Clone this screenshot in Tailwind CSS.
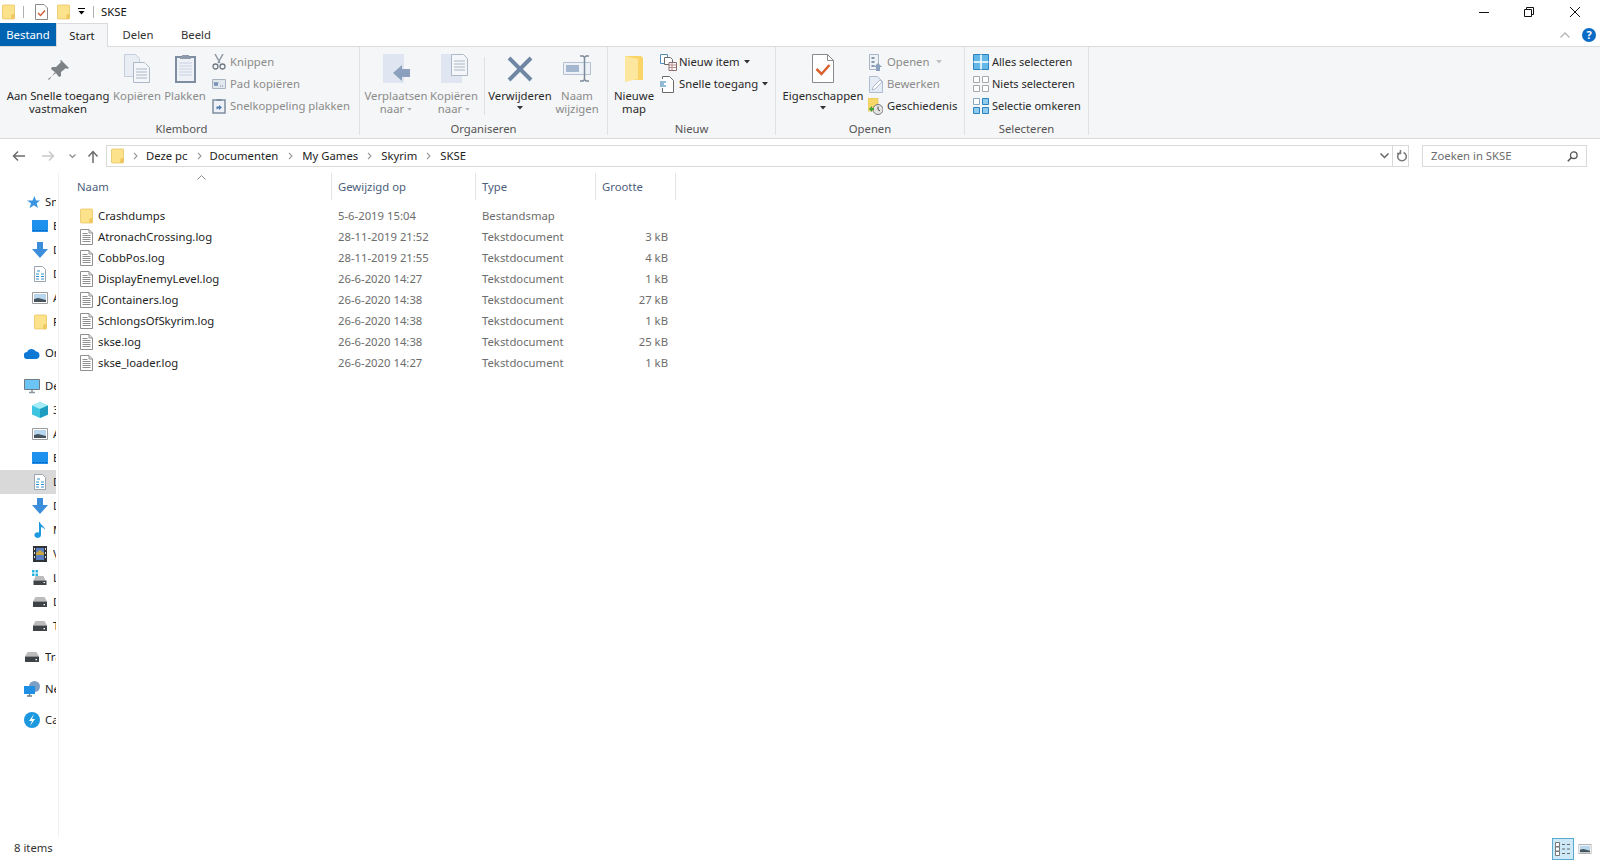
<!DOCTYPE html>
<html lang="nl">
<head>
<meta charset="UTF-8">
<title>SKSE</title>
<script src="https://cdn.jsdelivr.net/npm/@tailwindcss/browser@4"></script>
</head>
<body class="bg-white">

<!-- shared icons -->
<svg class="hidden">
  <symbol id="folder" viewBox="0 0 14 16">
    <path d="M.5 1.500a1 1 0 0 1 1-1h11a1 1 0 0 1 1 1v13a1 1 0 0 1-1 1h-11a1 1 0 0 1-1-1z" fill="#fde28c" stroke="#ecca6c"/>
    <path d="M10 15.500v-4.500l3.500-1v4.500a1 1 0 0 1-1 1z" fill="#eec65f"/>
  </symbol>
  <symbol id="doc" viewBox="0 0 13 16">
    <path d="M.5.5h8.500l3.500 3.500v11.500h-12z" fill="#fff" stroke="#8f8f8f"/>
    <path d="M9 .5v3.500h3.500" fill="none" stroke="#8f8f8f"/>
    <path d="M2.500 4.500h5M2.500 6.500h8M2.500 8.500h8M2.500 10.500h8M2.500 12.500h8" stroke="#8f8f8f"/>
  </symbol>
  <symbol id="screen" viewBox="0 0 16 14">
    <path d="M0 1h16v12H0z" fill="#1e90ee"/><path d="M1 11.500h14" stroke="#0c5fae" stroke-dasharray="2 1"/>
  </symbol>
  <symbol id="down" viewBox="0 0 16 16">
    <path d="M5 0h6v7h5l-8 9-8-9h5z" fill="#3a8edc"/>
  </symbol>
  <symbol id="textdoc" viewBox="0 0 12 16">
    <path d="M.5.5h8l3 3v12H.5z" fill="#fff" stroke="#9aa5ad"/>
    <path d="M3 5h3M2 8h3M7 8h3M2 10.500h3M7 10.500h3M2 13h3M7 13h3" stroke="#2f8fc8"/>
  </symbol>
  <symbol id="pics" viewBox="0 0 16 12">
    <path d="M.5.5h15v11H.5z" fill="#fff" stroke="#9c9c9c"/>
    <path d="M2 2h12v8H2z" fill="#b8d6ee"/><path d="M2 10V7l4-1 8 2v2z" fill="#46545c"/>
  </symbol>
  <symbol id="drive" viewBox="0 0 14 10">
    <path d="M2.500 0h9L14 4.500H0z" fill="#bcbcbc"/><path d="M0 4.500h14V10H0z" fill="#3d4346"/><path d="M10.500 7h1.500v1.200h-1.500z" fill="#fff"/>
  </symbol>
  <symbol id="caret" viewBox="0 0 6 4">
    <path d="M0 0h6L3 3.500z" fill="currentColor"/>
  </symbol>
  <symbol id="crumb" viewBox="0 0 5 8">
    <path d="M1 1l3 3-3 3" fill="none" stroke="#9a9a9a" stroke-width="1.100"/>
  </symbol>
</svg>

<div class="w-[1600px] h-[860px] overflow-hidden flex flex-col bg-white text-[11.3px] whitespace-nowrap text-[#1e1e1e] font-['Noto_Sans',sans-serif]">

  <!-- title bar -->
  <div class="h-[23px] flex items-center relative">
    <svg class="w-[13px] h-[16px] ml-[2px]"><use href="#folder"/></svg>
    <div class="w-px h-[12px] bg-[#b0b0b0] ml-[8px]"></div>
    <svg class="w-[13px] h-[16px] ml-[11px]" viewBox="0 0 13 16">
      <path d="M.5.5h8.500l3.500 3.500v11.500H.5z" fill="#fff" stroke="#8a8a8a"/>
      <path d="M3 9l2.500 2.500L10 6.500" fill="none" stroke="#d4603a" stroke-width="1.500"/>
    </svg>
    <svg class="w-[13px] h-[16px] ml-[9px]"><use href="#folder"/></svg>
    <div class="ml-[8px] flex flex-col items-center gap-[2px]">
      <div class="w-[7px] h-px bg-black"></div>
      <svg class="w-[7px] h-[4px] text-black"><use href="#caret"/></svg>
    </div>
    <div class="w-px h-[12px] bg-[#b0b0b0] ml-[8px]"></div>
    <span class="ml-[7px] pt-px text-[#111]">SKSE</span>
    <div class="ml-auto flex items-center">
      <svg class="w-[10px] h-[10px]" viewBox="0 0 10 10"><path d="M0 5.500h10" stroke="#111"/></svg>
      <svg class="w-[10px] h-[10px] ml-[35px]" viewBox="0 0 10 10"><path d="M.5 2.500h7v7h-7zM2.500 2.500v-2h7v7h-2" fill="none" stroke="#111"/></svg>
      <svg class="w-[10px] h-[10px] ml-[36px] mr-[20px]" viewBox="0 0 10 10"><path d="M0 0l10 10M10 0L0 10" stroke="#111"/></svg>
    </div>
  </div>

  <!-- tabs -->
  <div class="h-[23px] flex items-stretch relative">
    <div class="w-[56px] pt-px bg-[#0063b1] text-white flex items-center justify-center">Bestand</div>
    <div class="w-[52px] pt-px bg-[#f5f6f7] border-x border-t border-[#dadbdc] -mb-px z-10 flex items-center justify-center">Start</div>
    <div class="w-[60px] pt-px flex items-center justify-center text-[#333]">Delen</div>
    <div class="w-[56px] pt-px flex items-center justify-center text-[#333]">Beeld</div>
    <div class="ml-auto flex items-center">
      <svg class="w-[10px] h-[6px]" viewBox="0 0 10 6"><path d="M.5 5.500L5 1l4.500 4.500" fill="none" stroke="#b5b5b5" stroke-width="1.300"/></svg>
      <div class="w-[14px] h-[14px] rounded-full bg-[#0a6cc4] text-white font-bold text-[11px] leading-[14px] text-center ml-[12px] mr-[4px]">?</div>
    </div>
  </div>

  <!-- ribbon -->
  <div class="h-[93px] flex bg-[#f5f6f7] border-y border-[#dadbdc] text-[#8b8b8b]">

    <!-- Klembord -->
    <div class="w-[360px] relative border-r border-[#e1e2e3] mb-[3px]">
      <div class="flex h-[75px] pl-[4px]">
        <div class="w-[108px] flex flex-col items-center text-[#2a2a2a]">
          <div class="h-[42px] flex items-center justify-center pt-[5px]">
            <svg class="w-[21px] h-[21px]" viewBox="0 0 21 21"><path d="M13 0l8 8-2 1-1-1-5 4 0 4-2 1-4-5-6 8-1-1 8-6-5-4 1-2 4 0 5-5-1-1z" fill="#7d8287"/></svg>
          </div>
          <div class="text-center leading-[13px]">Aan Snelle toegang<br>vastmaken</div>
        </div>
        <div class="w-[50px] flex flex-col items-center">
          <div class="h-[42px] flex items-center justify-center pt-[1px]">
            <svg class="w-[26px] h-[29px]" viewBox="0 0 26 29">
              <path d="M.5.500h11l4 4v18H.500z" fill="#e9eef5" stroke="#c4cedb"/>
              <path d="M9.500 8.500h11l5 5v15h-16z" fill="#f4f6f9" stroke="#aeb9c7"/>
              <path d="M12 15h11M12 18h11M12 21h11M12 24h11" stroke="#a9b6c6"/>
            </svg>
          </div>
          <div class="leading-[13px]">Kopiëren</div>
        </div>
        <div class="w-[46px] flex flex-col items-center">
          <div class="h-[42px] flex items-center justify-center pt-[1px]">
            <svg class="w-[21px] h-[29px]" viewBox="0 0 21 29">
              <path d="M1 3h19v25H1z" fill="#eef1f6" stroke="#7f8da0" stroke-width="2"/>
              <path d="M7 3V1h7v2h2v2H5V3z" fill="#8e9aab"/>
              <path d="M4 9h13M4 12h13M4 15h13M4 18h13M4 21h13" stroke="#c9d3e0"/>
            </svg>
          </div>
          <div class="leading-[13px]">Plakken</div>
        </div>
        <div class="flex flex-col pt-[4px] ml-[4px]">
          <div class="h-[22px] flex items-center gap-[4px]">
            <svg class="w-[14px] h-[16px]" viewBox="0 0 14 16"><path d="M3 0l5 9M11 0L6 9" stroke="#8d98a5" stroke-width="1.500"/><circle cx="3.500" cy="12.500" r="2.500" fill="none" stroke="#6f7a86" stroke-width="1.300"/><circle cx="10.500" cy="12.500" r="2.500" fill="none" stroke="#6f7a86" stroke-width="1.300"/></svg>
            <span>Knippen</span>
          </div>
          <div class="h-[22px] flex items-center gap-[4px]">
            <svg class="w-[14px] h-[10px]" viewBox="0 0 14 10"><path d="M.500.500h13v9H.500z" fill="#e3e8ef" stroke="#a8b3c1"/><path d="M2 3l1 4 1-4 1 4 1-4M8 7h1M10 7h1" fill="none" stroke="#6e8bb0"/></svg>
            <span>Pad kopiëren</span>
          </div>
          <div class="h-[22px] flex items-center gap-[4px]">
            <svg class="w-[14px] h-[16px]" viewBox="0 0 14 16"><path d="M1 2h12v13H1z" fill="#eef1f6" stroke="#7f8da0" stroke-width="1.500"/><path d="M4.500 1h5v2h-5z" fill="#7f8da0"/><path d="M4.500 11.500V8.500h2.500V7l3 2.500-3 2.500v-1.500H6z" fill="#4f7cae"/></svg>
            <span>Snelkoppeling plakken</span>
          </div>
        </div>
      </div>
      <div class="text-center text-[#555] leading-[14px] pl-[4px]">Klembord</div>
    </div>

    <!-- Organiseren -->
    <div class="w-[248px] border-r border-[#e1e2e3] mb-[3px]">
      <div class="flex h-[75px] pl-[4px]">
        <div class="w-[64px] flex flex-col items-center">
          <div class="h-[42px] flex items-center justify-center pt-[1px]">
            <svg class="w-[27px] h-[29px]" viewBox="0 0 27 29"><path d="M0 0h21v29H0z" fill="#dfe6f1"/><path d="M10 19l9-8v4h8v8h-8v4z" fill="#8aa0bc"/></svg>
          </div>
          <div class="text-center leading-[13px]">Verplaatsen<br>naar <svg class="inline w-[5px] h-[3px] align-middle text-[#b0b0b0]"><use href="#caret"/></svg></div>
        </div>
        <div class="w-[52px] flex flex-col items-center">
          <div class="h-[42px] flex items-center justify-center pt-[1px]">
            <svg class="w-[27px] h-[29px]" viewBox="0 0 27 29"><path d="M0 0h21v29H0z" fill="#dfe6f1"/><path d="M10.500 0.500h12l4 4v17h-16z" fill="#f4f6f9" stroke="#aeb9c7"/><path d="M13 7h11M13 10h11M13 13h11M13 16h11" stroke="#a9b6c6"/></svg>
          </div>
          <div class="text-center leading-[13px]">Kopiëren<br>naar <svg class="inline w-[5px] h-[3px] align-middle text-[#b0b0b0]"><use href="#caret"/></svg></div>
        </div>
        <div class="w-px h-[58px] bg-[#dfe0e1] mt-[10px] ml-[4px] mr-[3px]"></div>
        <div class="w-[64px] flex flex-col items-center text-[#2a2a2a]">
          <div class="h-[42px] flex items-center justify-center pt-[1px]">
            <svg class="w-[26px] h-[26px]" viewBox="0 0 26 26"><path d="M2 2l22 22M24 2L2 24" stroke="#6f86a5" stroke-width="4"/></svg>
          </div>
          <div class="text-center leading-[13px]">Verwijderen</div>
          <svg class="w-[6px] h-[4px] mt-[4px] text-[#333]"><use href="#caret"/></svg>
        </div>
        <div class="w-[50px] flex flex-col items-center">
          <div class="h-[42px] flex items-center justify-center pt-[1px]">
            <svg class="w-[28px] h-[27px]" viewBox="0 0 28 27"><path d="M.5 7.500h27v12H.500z" fill="#eef2f7" stroke="#b3c0d1"/><path d="M3 10h13v7H3z" fill="#a3b7d1"/><path d="M17 1h3l1.500 1.500L23 1h3M17 26h3l1.500-1.500L23 26h3M21.500 2v23" fill="none" stroke="#7d8a9a" stroke-width="1.500"/></svg>
          </div>
          <div class="text-center leading-[13px]">Naam<br>wijzigen</div>
        </div>
      </div>
      <div class="text-center text-[#555] leading-[14px]">Organiseren</div>
    </div>

    <!-- Nieuw -->
    <div class="w-[168px] border-r border-[#e1e2e3] mb-[3px]">
      <div class="flex h-[75px] pl-[3px] text-[#2a2a2a]">
        <div class="w-[46px] flex flex-col items-center">
          <div class="h-[42px] flex items-center justify-center pt-[1px]">
            <svg class="w-[18px] h-[26px]" viewBox="0 0 18 26"><path d="M0 0h16l2 2v22H3l-3 2z" fill="#fbd468"/><path d="M0 0l13 3v20l-13 3z" fill="#fde79e"/></svg>
          </div>
          <div class="text-center leading-[13px]">Nieuwe<br>map</div>
        </div>
        <div class="flex flex-col pt-[4px] ml-[3px]">
          <div class="h-[22px] flex items-center">
            <svg class="w-[17px] h-[17px]" viewBox="0 0 17 17"><path d="M.5.5h7v9h-7z" fill="#fff" stroke="#4f8fc0"/><path d="M4.500 3.500h6l2 2v5h-8z" fill="#fff" stroke="#6a6a6a"/><path d="M9 8.500h7.500v8H9z" fill="#fff" stroke="#8a6a6a"/><path d="M9 11h7M9 13.500h7M12 9v7" stroke="#b58a8a"/></svg>
            <span class="ml-[2px]">Nieuw item</span>
            <svg class="w-[6px] h-[4px] ml-[4px] text-[#333]"><use href="#caret"/></svg>
          </div>
          <div class="h-[22px] flex items-center">
            <svg class="w-[14px] h-[17px] mr-[3px]" viewBox="0 0 14 17"><path d="M2.500 3V.5h7l4 4v12h-11V12" fill="#fff" stroke="#6a6a6a"/><path d="M0 6h6M0 8h4M0 10h6" stroke="#2c7ab0"/></svg>
            <span class="ml-[2px]">Snelle toegang</span>
            <svg class="w-[6px] h-[4px] ml-[4px] text-[#333]"><use href="#caret"/></svg>
          </div>
        </div>
      </div>
      <div class="text-center text-[#555] leading-[14px]">Nieuw</div>
    </div>

    <!-- Openen -->
    <div class="w-[189px] border-r border-[#e1e2e3] mb-[3px]">
      <div class="flex h-[75px] pl-[6px]">
        <div class="w-[82px] flex flex-col items-center text-[#2a2a2a]">
          <div class="h-[42px] flex items-center justify-center pt-[1px]">
            <svg class="w-[22px] h-[29px]" viewBox="0 0 22 29"><path d="M.5.500h15l6 6v22H.500z" fill="#fff" stroke="#8a8a8a"/><path d="M15.500.500v6h6" fill="none" stroke="#8a8a8a"/><path d="M4.500 15l5 5 8-9" fill="none" stroke="#d9622e" stroke-width="2.500"/></svg>
          </div>
          <div class="text-center leading-[13px]">Eigenschappen</div>
          <svg class="w-[6px] h-[4px] mt-[4px] text-[#333]"><use href="#caret"/></svg>
        </div>
        <div class="flex flex-col pt-[4px] ml-[5px]">
          <div class="h-[22px] flex items-center">
            <svg class="w-[14px] h-[17px]" viewBox="0 0 14 17"><path d="M.5.5h9v15h-9z" fill="#eef2f7" stroke="#a9b6c6"/><path d="M2.500 3h3v2h-3zM2.500 7h3v2h-3zM2.500 11h3v2h-3z" fill="#8898ad"/><path d="M7 17v-4H5l4-4 4 4h-2v4z" fill="#8aa0bc"/></svg>
            <span class="ml-[4px]">Openen</span>
            <svg class="w-[6px] h-[4px] ml-[7px] text-[#c0c0c0]"><use href="#caret"/></svg>
          </div>
          <div class="h-[22px] flex items-center">
            <svg class="w-[14px] h-[17px]" viewBox="0 0 14 17"><path d="M.5.5h8l5 5v11H.500z" fill="#e5ecf5" stroke="#aebcd0"/><path d="M3 14l1-3 7-7 2 2-7 7z" fill="#fff" stroke="#aebcd0"/></svg>
            <span class="ml-[4px]">Bewerken</span>
          </div>
          <div class="h-[22px] flex items-center text-[#2a2a2a]">
            <svg class="w-[15px] h-[17px] -ml-[1px]" viewBox="0 0 15 17"><path d="M0 0h10v13H0z" fill="#f6d767" stroke="#d6b548" stroke-width=".5"/><circle cx="10" cy="11.500" r="5" fill="#e4e4e4" stroke="#777"/><path d="M10 8.500v3l2 1.500" fill="none" stroke="#444"/><path d="M1 11l3-3v2h2v2H4v2z" fill="#3fa33a"/></svg>
            <span class="ml-[4px]">Geschiedenis</span>
          </div>
        </div>
      </div>
      <div class="text-center text-[#555] leading-[14px]">Openen</div>
    </div>

    <!-- Selecteren -->
    <div class="w-[124px] border-r border-[#e1e2e3] mb-[3px] text-[#2a2a2a]">
      <div class="flex flex-col h-[75px] pt-[4px] pl-[8px] text-[11px]">
        <div class="h-[22px] flex items-center">
          <svg class="w-[16px] h-[16px]" viewBox="0 0 16 16"><path d="M.5.500h15v15H.500z" fill="#63b8e8" stroke="#2d83c0"/><path d="M8 .5v15M.5 8h15" stroke="#fff" stroke-width="1.500"/></svg>
          <span class="ml-[3px]">Alles selecteren</span>
        </div>
        <div class="h-[22px] flex items-center">
          <svg class="w-[16px] h-[16px]" viewBox="0 0 16 16"><path d="M.5.500h6v6h-6zM9.500.500h6v6h-6zM.500 9.500h6v6h-6zM9.500 9.500h6v6h-6z" fill="#fff" stroke="#a8a8a8"/></svg>
          <span class="ml-[3px]">Niets selecteren</span>
        </div>
        <div class="h-[22px] flex items-center">
          <svg class="w-[16px] h-[16px]" viewBox="0 0 16 16"><path d="M.5.500h6v6h-6z" fill="#fff" stroke="#8aa8c0"/><path d="M9.500.500h6v6h-6zM.500 9.500h6v6h-6zM9.500 9.500h6v6h-6z" fill="#8fcbed" stroke="#2d83c0"/></svg>
          <span class="ml-[3px]">Selectie omkeren</span>
        </div>
      </div>
      <div class="text-center text-[#555] leading-[14px]">Selecteren</div>
    </div>
  </div>

  <!-- address bar -->
  <div class="h-[34px] flex items-start pt-[6px] shrink-0">
    <div class="w-[106px] h-[22px] relative flex items-center">
      <svg class="w-[14px] h-[12px] ml-[12px]" viewBox="0 0 14 12"><path d="M13 6H2M6 1.500L1.500 6 6 10.500" fill="none" stroke="#6b6b6b" stroke-width="1.500"/></svg>
      <svg class="w-[14px] h-[12px] ml-[15px]" viewBox="0 0 14 12"><path d="M1 6h11M8 1.500L12.500 6 8 10.500" fill="none" stroke="#c9c9c9" stroke-width="1.500"/></svg>
      <svg class="w-[7px] h-[5px] ml-[14px]" viewBox="0 0 7 5"><path d="M.5.500L3.500 3.500 6.500.5" fill="none" stroke="#8a8a8a" stroke-width="1.200"/></svg>
      <svg class="w-[12px] h-[13px] ml-[11px]" viewBox="0 0 12 13"><path d="M6 13V2M1.500 6.500L6 1.500l4.500 5" fill="none" stroke="#6b6b6b" stroke-width="1.500"/></svg>
    </div>
    <div class="w-[1303px] h-[22px] border border-[#d9d9d9] flex items-center">
      <svg class="w-[13px] h-[16px] ml-[4px]"><use href="#folder"/></svg>
      <svg class="w-[5px] h-[8px] ml-[9px] mr-[8px]"><use href="#crumb"/></svg><span>Deze pc</span>
      <svg class="w-[5px] h-[8px] ml-[9px] mr-[8px]"><use href="#crumb"/></svg><span>Documenten</span>
      <svg class="w-[5px] h-[8px] ml-[10px] mr-[9px]"><use href="#crumb"/></svg><span>My Games</span>
      <svg class="w-[5px] h-[8px] mx-[9px]"><use href="#crumb"/></svg><span>Skyrim</span>
      <svg class="w-[5px] h-[8px] mx-[9px]"><use href="#crumb"/></svg><span>SKSE</span>
      <div class="ml-auto flex items-center h-full">
        <svg class="w-[9px] h-[6px] mr-[3px]" viewBox="0 0 9 6"><path d="M.5.500L4.500 4.500 8.500.5" fill="none" stroke="#666" stroke-width="1.500"/></svg>
        <div class="w-[16px] h-full border-l border-[#d9d9d9] flex items-center justify-center pl-[2px]">
          <svg class="w-[10px] h-[12px]" viewBox="0 0 10 12"><path d="M3.500 2.500a4.300 4.300 0 1 0 3 0M3.500 0v3.500H0" fill="none" stroke="#7a7a7a" stroke-width="1.500"/></svg>
        </div>
      </div>
    </div>
    <div class="w-[165px] h-[22px] border border-[#d9d9d9] ml-[13px] flex items-center pl-[8px] pr-[8px] text-[#6d6d6d]">
      <span>Zoeken in SKSE</span>
      <svg class="w-[11px] h-[11px] ml-auto" viewBox="0 0 11 11"><circle cx="6.800" cy="4.200" r="3.300" fill="none" stroke="#555" stroke-width="1.300"/><path d="M4.500 6.500L.8 10.200" stroke="#555" stroke-width="1.600"/></svg>
    </div>
  </div>

  <!-- body -->
  <div class="flex-1 flex min-h-0">

    <!-- navigation pane, squeezed so only first letters show -->
    <div class="w-[59px] border-r border-[#f2f2f2] shrink-0">
      <div class="w-[56px] overflow-hidden pt-[17px]">
        <div class="h-[24px] flex items-center pl-[27px]">
          <svg class="w-[13px] h-[13px] shrink-0" viewBox="0 0 13 13"><path d="M7.500 0l1.500 4.500h4l-3.300 2.800 1.200 4.700-4-2.800-4.400 3 1.500-5L0 4.500h5.500z" fill="#3a94e0"/></svg>
          <span class="ml-[5px] overflow-hidden">Snelle toegang</span>
        </div>
        <div class="h-[24px] flex items-center pl-[32px]"><svg class="w-[16px] h-[14px] shrink-0"><use href="#screen"/></svg><span class="ml-[5px] overflow-hidden">Bureaublad</span></div>
        <div class="h-[24px] flex items-center pl-[32px]"><svg class="w-[16px] h-[16px] shrink-0"><use href="#down"/></svg><span class="ml-[5px] overflow-hidden">Downloads</span></div>
        <div class="h-[24px] flex items-center pl-[34px]"><svg class="w-[12px] h-[16px] shrink-0"><use href="#textdoc"/></svg><span class="ml-[7px] overflow-hidden">Documenten</span></div>
        <div class="h-[24px] flex items-center pl-[32px]"><svg class="w-[16px] h-[12px] shrink-0"><use href="#pics"/></svg><span class="ml-[5px] overflow-hidden">Afbeeldingen</span></div>
        <div class="h-[24px] flex items-center pl-[34px]"><svg class="w-[13px] h-[16px] shrink-0"><use href="#folder"/></svg><span class="ml-[6px] overflow-hidden">Fotos</span></div>

        <div class="h-[24px] mt-[7px] flex items-center pl-[24px]">
          <svg class="w-[16px] h-[11px] shrink-0" viewBox="0 0 16 11"><path d="M3.500 11a3.500 3.500 0 0 1-.5-7A5 5 0 0 1 12 3.500 3.800 3.800 0 0 1 12.500 11z" fill="#0f78d4"/></svg>
          <span class="ml-[5px] overflow-hidden">OneDrive</span>
        </div>

        <div class="h-[24px] mt-[9px] flex items-center pl-[24px]">
          <svg class="w-[16px] h-[15px] shrink-0" viewBox="0 0 16 15"><path d="M.5.500h15v10H.500z" fill="#6cc5f5" stroke="#6f7c86"/><path d="M5 13.500h6M8 11v2" stroke="#8a97a1" stroke-width="1.500"/></svg>
          <span class="ml-[5px] overflow-hidden">Deze pc</span>
        </div>
        <div class="h-[24px] flex items-center pl-[32px]">
          <svg class="w-[16px] h-[16px] shrink-0" viewBox="0 0 16 16"><path d="M8 0l8 3.500v9L8 16l-8-3.500v-9z" fill="#3cc4e0"/><path d="M8 0l8 3.500L8 7 0 3.500z" fill="#a5ecf7"/><path d="M8 7l8-3.500v9L8 16z" fill="#1d9cc0"/></svg>
          <span class="ml-[5px] overflow-hidden">3D-objecten</span>
        </div>
        <div class="h-[24px] flex items-center pl-[32px]"><svg class="w-[16px] h-[12px] shrink-0"><use href="#pics"/></svg><span class="ml-[5px] overflow-hidden">Afbeeldingen</span></div>
        <div class="h-[24px] flex items-center pl-[32px]"><svg class="w-[16px] h-[14px] shrink-0"><use href="#screen"/></svg><span class="ml-[5px] overflow-hidden">Bureaublad</span></div>
        <div class="h-[24px] flex items-center pl-[34px] bg-[#d9d9d9]"><svg class="w-[12px] h-[16px] shrink-0"><use href="#textdoc"/></svg><span class="ml-[7px] overflow-hidden">Documenten</span></div>
        <div class="h-[24px] flex items-center pl-[32px]"><svg class="w-[16px] h-[16px] shrink-0"><use href="#down"/></svg><span class="ml-[5px] overflow-hidden">Downloads</span></div>
        <div class="h-[24px] flex items-center pl-[34px]">
          <svg class="w-[12px] h-[16px] shrink-0" viewBox="0 0 12 16"><path d="M6 0c0 3 5 4 5 8-1-2-3-3-4-3v8a3.300 2.800 0 1 1-2-2.500V0z" fill="#1e9be0"/></svg>
          <span class="ml-[7px] overflow-hidden">Muziek</span>
        </div>
        <div class="h-[24px] flex items-center pl-[33px]">
          <svg class="w-[14px] h-[16px] shrink-0" viewBox="0 0 14 16"><path d="M0 0h14v16H0z" fill="#2f3338"/><path d="M3 2h8v12H3z" fill="#5a7fc0"/><path d="M3 7l4-3 4 3v2H3z" fill="#c8a63e"/><path d="M1 2h1v2H1zM1 6h1v2H1zM1 10h1v2H1zM12 2h1v2h-1zM12 6h1v2h-1zM12 10h1v2h-1z" fill="#ddd"/></svg>
          <span class="ml-[6px] overflow-hidden">Video's</span>
        </div>
        <div class="h-[24px] flex items-center pl-[32px] relative">
          <svg class="w-[15px] h-[16px] shrink-0" viewBox="0 0 15 16"><path d="M0 0h2.500v2.500H0zM3.500 0H6v2.500H3.500zM0 3.500h2.500V6H0zM3.500 3.500H6V6H3.500z" fill="#27b4dc"/><path d="M3.500 6h8l2 4.500H1.500z" fill="#bcbcbc"/><path d="M1.500 10.500h13V15h-13z" fill="#3d4346"/><path d="M11.500 12h1.500v1h-1.500z" fill="#fff"/></svg>
          <span class="ml-[6px] overflow-hidden">Lokale</span>
        </div>
        <div class="h-[24px] flex items-center pl-[33px]"><svg class="w-[14px] h-[10px] shrink-0"><use href="#drive"/></svg><span class="ml-[6px] overflow-hidden">Data</span></div>
        <div class="h-[24px] flex items-center pl-[33px]"><svg class="w-[14px] h-[10px] shrink-0"><use href="#drive"/></svg><span class="ml-[6px] overflow-hidden">Transfer</span></div>

        <div class="h-[24px] mt-[7px] flex items-center pl-[25px]"><svg class="w-[14px] h-[10px] shrink-0"><use href="#drive"/></svg><span class="ml-[6px] overflow-hidden">Transfer</span></div>
        <div class="h-[24px] mt-[8px] flex items-center pl-[24px]">
          <svg class="w-[16px] h-[16px] shrink-0" viewBox="0 0 16 16"><circle cx="10.500" cy="5.500" r="5.500" fill="#7d9fc6"/><path d="M0 5h11v8H0z" fill="#1f8fe4"/><path d="M3 15h5M5.500 13v2" stroke="#6f7c86" stroke-width="1.300"/></svg>
          <span class="ml-[5px] overflow-hidden">Netwerk</span>
        </div>
        <div class="h-[24px] mt-[7px] flex items-center pl-[24px]">
          <svg class="w-[16px] h-[16px] shrink-0" viewBox="0 0 16 16"><circle cx="8" cy="8" r="8" fill="#1c98de"/><path d="M10 2L5 9h3l-2 5 5-7H8z" fill="#fff"/></svg>
          <span class="ml-[5px] overflow-hidden">Calibre</span>
        </div>
      </div>
    </div>

    <!-- file list -->
    <div class="flex-1 relative text-[#6d6d6d]">
      <svg class="absolute left-[138px] top-[2px] w-[9px] h-[5px]" viewBox="0 0 9 5"><path d="M.5 4.500L4.500.5l4 4" fill="none" stroke="#8a8a8a"/></svg>
      <div class="flex h-[27px] mb-[6px] text-[#4c607a]">
        <div class="w-[273px] pl-[18px] pt-[6px] border-r border-[#e5e5e5]">Naam</div>
        <div class="w-[144px] pl-[6px] pt-[6px] border-r border-[#e5e5e5]">Gewijzigd op</div>
        <div class="w-[120px] pl-[6px] pt-[6px] border-r border-[#e5e5e5]">Type</div>
        <div class="w-[80px] pl-[6px] pt-[6px] border-r border-[#e5e5e5]">Grootte</div>
      </div>

      <div class="flex h-[21px] items-center">
        <div class="w-[273px] pl-[21px] flex items-center"><svg class="w-[13px] h-[16px] -mt-[2px]"><use href="#folder"/></svg><span class="ml-[5px] text-[#1e1e1e]">Crashdumps</span></div>
        <div class="w-[144px] pl-[6px]">5-6-2019 15:04</div>
        <div class="w-[120px] pl-[6px]">Bestandsmap</div>
        <div class="w-[80px] pr-[8px] text-right"></div>
      </div>
      <div class="flex h-[21px] items-center">
        <div class="w-[273px] pl-[21px] flex items-center"><svg class="w-[13px] h-[16px] -mt-[2px]"><use href="#doc"/></svg><span class="ml-[5px] text-[#1e1e1e]">AtronachCrossing.log</span></div>
        <div class="w-[144px] pl-[6px]">28-11-2019 21:52</div>
        <div class="w-[120px] pl-[6px]">Tekstdocument</div>
        <div class="w-[80px] pr-[8px] text-right">3 kB</div>
      </div>
      <div class="flex h-[21px] items-center">
        <div class="w-[273px] pl-[21px] flex items-center"><svg class="w-[13px] h-[16px] -mt-[2px]"><use href="#doc"/></svg><span class="ml-[5px] text-[#1e1e1e]">CobbPos.log</span></div>
        <div class="w-[144px] pl-[6px]">28-11-2019 21:55</div>
        <div class="w-[120px] pl-[6px]">Tekstdocument</div>
        <div class="w-[80px] pr-[8px] text-right">4 kB</div>
      </div>
      <div class="flex h-[21px] items-center">
        <div class="w-[273px] pl-[21px] flex items-center"><svg class="w-[13px] h-[16px] -mt-[2px]"><use href="#doc"/></svg><span class="ml-[5px] text-[#1e1e1e]">DisplayEnemyLevel.log</span></div>
        <div class="w-[144px] pl-[6px]">26-6-2020 14:27</div>
        <div class="w-[120px] pl-[6px]">Tekstdocument</div>
        <div class="w-[80px] pr-[8px] text-right">1 kB</div>
      </div>
      <div class="flex h-[21px] items-center">
        <div class="w-[273px] pl-[21px] flex items-center"><svg class="w-[13px] h-[16px] -mt-[2px]"><use href="#doc"/></svg><span class="ml-[5px] text-[#1e1e1e]">JContainers.log</span></div>
        <div class="w-[144px] pl-[6px]">26-6-2020 14:38</div>
        <div class="w-[120px] pl-[6px]">Tekstdocument</div>
        <div class="w-[80px] pr-[8px] text-right">27 kB</div>
      </div>
      <div class="flex h-[21px] items-center">
        <div class="w-[273px] pl-[21px] flex items-center"><svg class="w-[13px] h-[16px] -mt-[2px]"><use href="#doc"/></svg><span class="ml-[5px] text-[#1e1e1e]">SchlongsOfSkyrim.log</span></div>
        <div class="w-[144px] pl-[6px]">26-6-2020 14:38</div>
        <div class="w-[120px] pl-[6px]">Tekstdocument</div>
        <div class="w-[80px] pr-[8px] text-right">1 kB</div>
      </div>
      <div class="flex h-[21px] items-center">
        <div class="w-[273px] pl-[21px] flex items-center"><svg class="w-[13px] h-[16px] -mt-[2px]"><use href="#doc"/></svg><span class="ml-[5px] text-[#1e1e1e]">skse.log</span></div>
        <div class="w-[144px] pl-[6px]">26-6-2020 14:38</div>
        <div class="w-[120px] pl-[6px]">Tekstdocument</div>
        <div class="w-[80px] pr-[8px] text-right">25 kB</div>
      </div>
      <div class="flex h-[21px] items-center">
        <div class="w-[273px] pl-[21px] flex items-center"><svg class="w-[13px] h-[16px] -mt-[2px]"><use href="#doc"/></svg><span class="ml-[5px] text-[#1e1e1e]">skse_loader.log</span></div>
        <div class="w-[144px] pl-[6px]">26-6-2020 14:27</div>
        <div class="w-[120px] pl-[6px]">Tekstdocument</div>
        <div class="w-[80px] pr-[8px] text-right">1 kB</div>
      </div>
    </div>
  </div>

  <!-- status bar -->
  <div class="h-[23px] shrink-0 flex items-center pl-[14px] pr-[8px]">
    <span class="text-[#333]">8 items</span>
    <div class="ml-auto flex items-center gap-[4px]">
      <div class="w-[22px] h-[22px] bg-[#cde8f7] border border-[#5aa9cf] flex items-center justify-center">
        <svg class="w-[16px] h-[14px]" viewBox="0 0 16 14"><path d="M.5.500h4v4h-4zM.5 5h4v4h-4zM.5 9.500h4v4h-4z" fill="#fff" stroke="#777"/><path d="M7 2.500h3M12 2.500h3M7 7h3M12 7h3M7 11.500h3M12 11.500h3" stroke="#666"/></svg>
      </div>
      <svg class="w-[14px] h-[10px]" viewBox="0 0 16 12"><use href="#pics"/></svg>
    </div>
  </div>
</div>
</body>
</html>
